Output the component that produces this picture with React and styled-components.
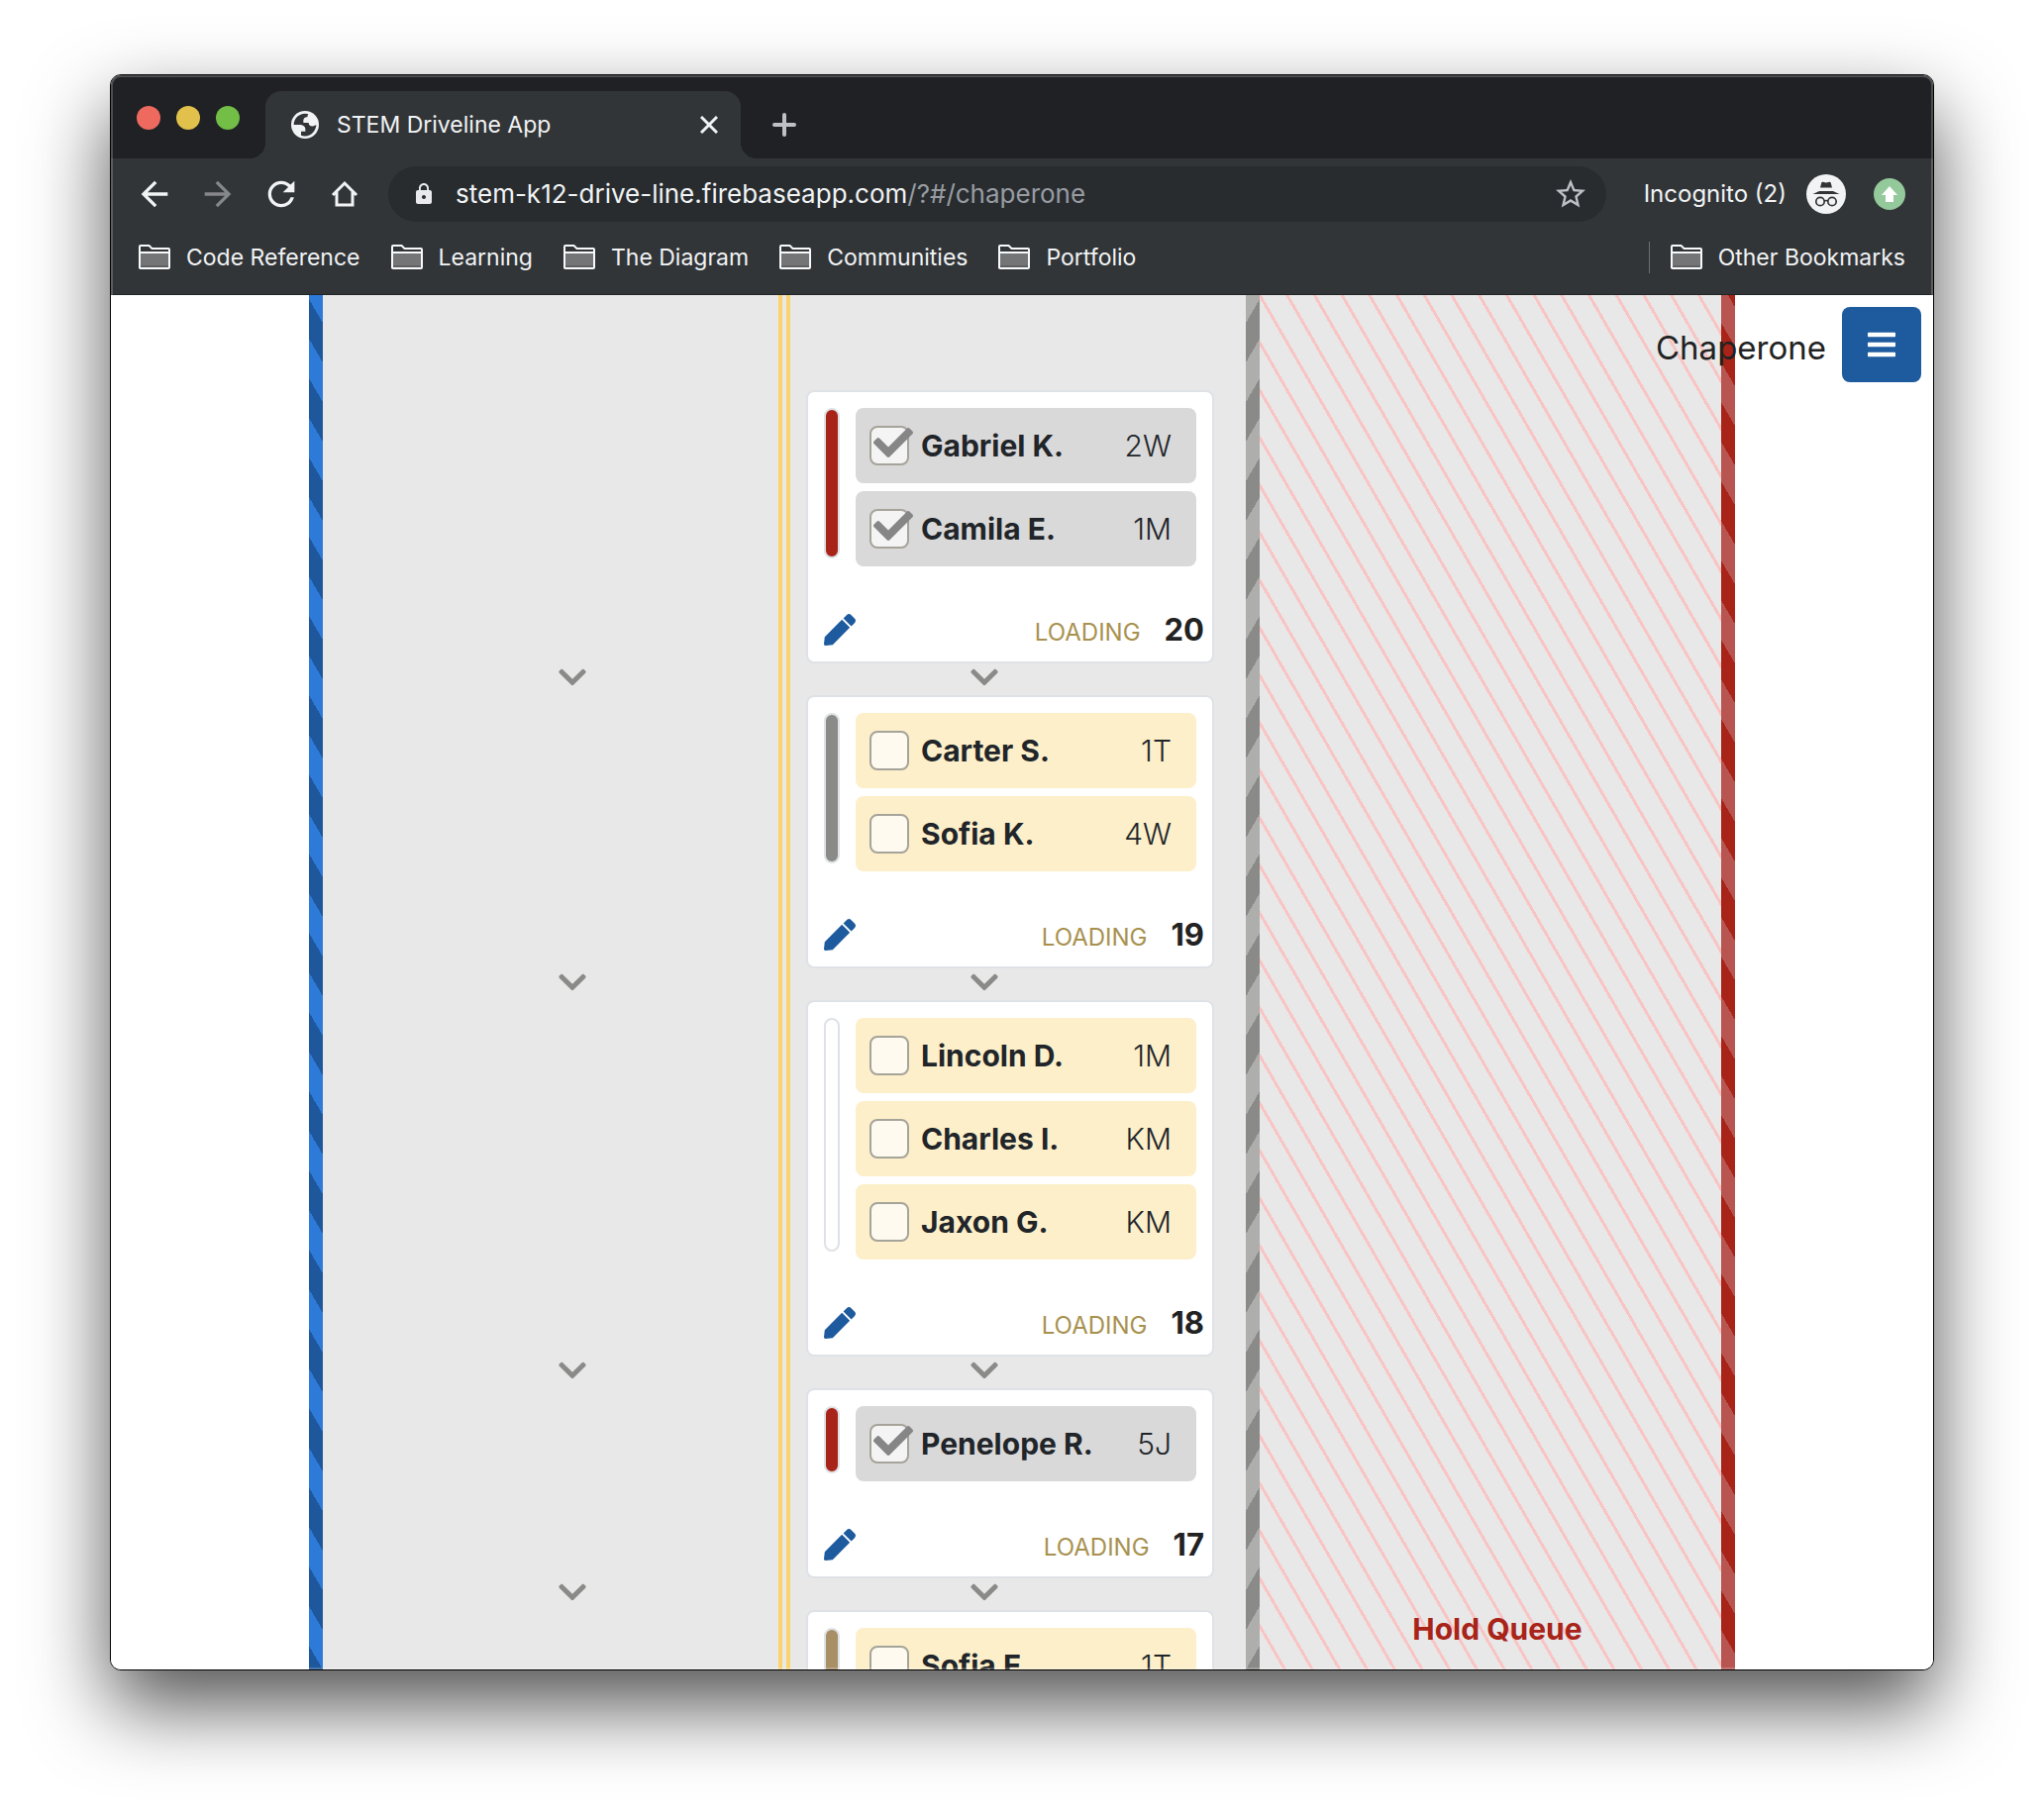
import React from "react";
import styled, { createGlobalStyle } from "styled-components";
import { FaBars, FaCheck, FaChevronDown, FaPen } from "react-icons/fa";
import { MdArrowBack, MdArrowForward, MdLock, MdRefresh, MdStarBorder } from "react-icons/md";

const colors = {
  blue: "#1e5a9e",
  blueLight: "#2e7ad9",
  red: "#a82318",
  redLight: "#b85550",
  gray: "#8a8a88",
  grayLight: "#aeaeac",
  tan: "#a98f66",
  white: "#ffffff",
  yellow: "#fad36a",
  road: "#e8e8e8",
  chrome: "#323538",
  ink: "#212529",
};

const GlobalStyle = createGlobalStyle`
  *, *::before, *::after { box-sizing: border-box; }
  body {
    margin: 0;
    background: #ffffff;
    font-family: Inter, "Liberation Sans", sans-serif;
    color: ${colors.ink};
  }
  button, input { font: inherit; color: inherit; margin: 0; padding: 0; }
  button { border: 0; background: none; cursor: pointer; }
  svg { display: block; flex: none; }
  p, ul { margin: 0; padding: 0; list-style: none; }
`;

const Desktop = styled.div`
  display: flex;
  height: 100vh;
  padding: 75px 111px 147px;
`;

const Window = styled.div`
  position: relative;
  flex: 1;
  min-width: 0;
  display: flex;
  flex-direction: column;
  overflow: hidden;
  border: 1px solid #000000;
  border-radius: 11px;
  background: #ffffff;
  box-shadow: 0 36px 80px rgba(0, 0, 0, 0.68);

  &::after {
    content: "";
    position: absolute;
    inset: 0;
    border-radius: 10px;
    box-shadow: inset 0 0 0 2px rgba(255, 255, 255, 0.2);
    pointer-events: none;
  }
`;

/* Tab strip */

const TabStrip = styled.div`
  display: flex;
  align-items: flex-end;
  height: 84px;
  padding-left: 26px;
  background: #202124;
`;

const WindowButtons = styled.div`
  display: flex;
  gap: 16px;
  align-self: center;
  margin-right: 26px;
  padding-top: 2px;
`;

const WindowButton = styled.button`
  width: 24px;
  height: 24px;
  border-radius: 50%;
  background: ${(p) => p.$color};
`;

const Tab = styled.div`
  position: relative;
  display: flex;
  align-items: center;
  width: 480px;
  height: 68px;
  padding: 0 20px 0 26px;
  border-radius: 16px 16px 0 0;
  background: ${colors.chrome};
  color: #f1f3f4;

  &::before,
  &::after {
    content: "";
    position: absolute;
    bottom: 0;
    width: 16px;
    height: 16px;
  }
  &::before {
    right: 100%;
    background: radial-gradient(circle at 0 0, transparent 16px, ${colors.chrome} 16px);
  }
  &::after {
    left: 100%;
    background: radial-gradient(circle at 100% 0, transparent 16px, ${colors.chrome} 16px);
  }
`;

const TabTitle = styled.span`
  flex: 1;
  margin-left: 18px;
  font-size: 23px;
  line-height: 32px;
  white-space: nowrap;
`;

const IconButton = styled.button`
  display: grid;
  place-items: center;
  width: ${(p) => p.$size || 40}px;
  height: ${(p) => p.$size || 40}px;
  color: ${(p) => p.$color || "#f1f3f4"};
`;

const NewTab = styled(IconButton)`
  align-self: center;
  margin: 16px 0 0 28px;
`;

/* Toolbar */

const Toolbar = styled.div`
  display: flex;
  align-items: center;
  height: 72px;
  padding: 0 28px 0 24px;
  background: ${colors.chrome};
`;

const NavButtons = styled.nav`
  display: flex;
  gap: 24px;
`;

const AddressBar = styled.form`
  flex: 1;
  display: flex;
  align-items: center;
  height: 56px;
  margin: 0 38px 0 24px;
  padding: 0 18px 0 24px;
  border-radius: 28px;
  background: #282c2f;
`;

const Address = styled.div`
  flex: 1;
  margin-left: 20px;
  font-size: 26px;
  line-height: 36px;
  color: #f1f3f4;
`;

const AddressPath = styled.span`
  color: #989ca2;
`;

const Profile = styled.button`
  display: flex;
  align-items: center;
  gap: 20px;
  margin-right: 28px;
  color: #f1f3f4;
  font-size: 24px;
  line-height: 32px;
`;

/* Bookmarks */

const Bookmarks = styled.div`
  display: flex;
  align-items: center;
  gap: 31px;
  height: 66px;
  padding: 0 28px 10px;
  border-bottom: 1px solid #222426;
  background: ${colors.chrome};
`;

const Bookmark = styled.a`
  display: flex;
  align-items: center;
  gap: 16px;
  color: #f1f3f4;
  font-size: 23px;
  line-height: 32px;
  text-decoration: none;
  white-space: nowrap;
`;

const OtherBookmarks = styled.div`
  margin-left: auto;
  padding-left: 21px;
  border-left: 1px solid #6b6e71;
`;

/* Page */

const Page = styled.main`
  position: relative;
  flex: 1;
  min-height: 0;
  overflow: hidden;
  background: #ffffff;
`;

const Road = styled.div`
  display: grid;
  grid-template-columns: 2fr 1fr;
  grid-template-rows: 100%;
  height: 100%;
  max-width: 1440px;
  margin: 0 auto;
  background: ${colors.road};
`;

const Curb = styled.div`
  flex: none;
  width: 14px;
  background: repeating-linear-gradient(
      ${(p) => p.$angle}deg,
      ${(p) => p.$light} 0 20px,
      ${(p) => p.$dark} 20px 40px
    )
    0 ${(p) => p.$offset}px / 14px 80px;
`;

const DriveLanes = styled.section`
  display: flex;
  min-height: 0;
`;

const Queue = styled.div`
  flex: 1;
  padding-top: 96px;
  overflow-y: auto;
  scrollbar-width: none;
  background: linear-gradient(
      90deg,
      ${colors.yellow} 4px,
      transparent 4px 8px,
      ${colors.yellow} 8px
    )
    center / 12px 100% no-repeat;
`;

const QueueRow = styled.div`
  display: grid;
  grid-template-columns: 1fr 1fr;
`;

const ArrowRow = styled(QueueRow)`
  grid-template-rows: 28px;
  height: 32px;
  align-items: center;
  justify-items: center;
  color: ${colors.gray};
`;

const LeftArrow = styled.div`
  padding-left: 38px;
`;

const RightArrow = styled.div`
  padding-right: 62px;
`;

const Card = styled.article`
  grid-column: 2;
  margin: 0 32px 0 22px;
  border: 2px solid #dee2e6;
  border-radius: 8px;
  background: #ffffff;
`;

const CardBody = styled.div`
  display: flex;
  gap: 16px;
  padding: 16px 16px 0;
`;

const CarColor = styled.div`
  width: 16px;
  margin-bottom: 8px;
  border: 2px solid #dee2e6;
  border-radius: 8px;
  background: ${(p) => p.$color};
`;

const Students = styled.ul`
  flex: 1;
  display: flex;
  flex-direction: column;
  gap: 8px;
`;

const StudentRow = styled.label`
  display: flex;
  align-items: center;
  gap: 12px;
  height: 76px;
  padding: 0 25px 0 14px;
  border-radius: 8px;
  background: ${(p) => (p.$loaded ? "#d9d9d9" : "#fcefc9")};
`;

const TickBox = styled.span`
  position: relative;
  display: flex;
  color: #868686;

  svg {
    position: absolute;
    top: -3px;
    left: 4px;
    pointer-events: none;
  }
`;

const Tick = styled.input`
  appearance: none;
  width: 40px;
  height: 40px;
  border: 2px solid #a6a39a;
  border-radius: 8px;
  background: rgba(255, 255, 255, 0.7);
`;

const StudentName = styled.span`
  flex: 1;
  font-size: 30px;
  font-weight: 700;
  line-height: 40px;
  white-space: nowrap;
`;

const ClassCode = styled.span`
  font-size: 30px;
  font-weight: 300;
  line-height: 40px;
`;

const CardFooter = styled.footer`
  display: flex;
  align-items: center;
  height: 96px;
  padding: 32px 8px 0 16px;
  color: ${colors.blue};
`;

const Status = styled.p`
  display: flex;
  align-items: baseline;
  gap: 24px;
  margin-left: auto;
  padding-top: 2px;
  color: #a8914f;
  font-size: 24px;
  line-height: 40px;
`;

const CarNumber = styled.strong`
  color: #222222;
  font-size: 31px;
  font-weight: 700;
`;

const HoldLane = styled.section`
  display: flex;
  min-height: 0;
`;

const HoldArea = styled.div`
  flex: 1;
  display: flex;
  align-items: flex-end;
  justify-content: center;
  padding: 0 0 21px 14px;
  background: repeating-linear-gradient(60deg, #f9c5c4 0 3px, transparent 3px 24px) 0 3px / 100% 1440px;
`;

const HoldTitle = styled.h2`
  margin: 0;
  color: ${colors.red};
  font-size: 30px;
  font-weight: 700;
  line-height: 40px;
`;

const PageHeader = styled.header`
  position: absolute;
  top: 12px;
  right: 12px;
  display: flex;
  align-items: center;
  gap: 16px;
  color: #222222;
  font-size: 33px;
  line-height: 48px;
`;

const PageTitle = styled.span`
  padding-top: 6px;
`;

const MenuButton = styled.button`
  display: grid;
  place-items: center;
  width: 80px;
  height: 76px;
  border-radius: 8px;
  background: ${colors.blue};
  color: #ffffff;
`;

const GlobeIcon = () => (
  <svg width="28" height="28" viewBox="0 0 16 16" aria-hidden="true">
    <circle cx="8" cy="8" r="8" fill="#f1f3f4" />
    <path
      d="M1.500 8h3.300c2.600 0 3.700 1.300 3.400 3.800H5.700v2.300c.7.200 1.500.4 2.300.4 3.700 0 6.300-3 6.500-6.500-.7.500-1.400.8-2.200.8-1.500 0-2.200-.7-2.200-2H7.100c-.3-2.200.5-3.200 2.300-3.200 0-.9.200-1.500.6-1.800C9.400 1.600 8.700 1.500 8 1.500 4.400 1.500 1.500 4.400 1.500 8z"
      fill={colors.chrome}
    />
  </svg>
);

const HomeIcon = () => (
  <svg width="28" height="28" viewBox="0 0 28 28" fill="none" stroke="currentColor" strokeWidth="3" aria-hidden="true">
    <path d="M2 15 14 3l12 12M6 12v13h16V12" />
  </svg>
);

const CloseIcon = () => (
  <svg width="18" height="18" viewBox="0 0 18 18" stroke="currentColor" strokeWidth="3" aria-hidden="true">
    <path d="m1 1 16 16M17 1 1 17" />
  </svg>
);

const PlusIcon = () => (
  <svg width="24" height="24" viewBox="0 0 24 24" stroke="currentColor" strokeWidth="4" strokeLinecap="round" aria-hidden="true">
    <path d="M2 12h20M12 2v20" />
  </svg>
);

const FolderIcon = () => (
  <svg width="32" height="25" viewBox="0 0 32 25" aria-hidden="true">
    <path d="M1 8h30v16H1z" fill="#747577" />
    <path d="M1 21h30v3H1z" fill="#5f6062" />
    <path d="M1 24V2q0-1 1-1h8.500l3 3H30q1 0 1 1v18q0 1-1 1H2q-1 0-1-1zM1 8h30" fill="none" stroke="#f8f9fa" strokeWidth="2" />
  </svg>
);

const IncognitoIcon = () => (
  <svg width="40" height="40" viewBox="0 0 40 40" aria-hidden="true">
    <circle cx="20" cy="20" r="20" fill="#f1f3f4" />
    <path d="m14 13.500 1.300-5q.3-1 1.500-.8l3.200.8 3.200-.8q1.200-.2 1.500.8l1.300 5z" fill="#323538" />
    <path d="M6.500 20q3.500-1.500 6.500-3h14q3 1.500 6.500 3z" fill="#323538" />
    <g fill="none" stroke="#323538" strokeWidth="1.700">
      <circle cx="14" cy="27.500" r="4.200" />
      <circle cx="26" cy="27.500" r="4.200" />
      <path d="M18 27q2-1 4 0" />
    </g>
  </svg>
);

const UpdateIcon = () => (
  <svg width="32" height="32" viewBox="0 0 32 32" aria-hidden="true">
    <circle cx="16" cy="16" r="16" fill="#93c99b" />
    <path d="m16 8 8 9h-4v7h-8v-7H8z" fill="#ffffff" />
  </svg>
);

const bookmarks = ["Code Reference", "Learning", "The Diagram", "Communities", "Portfolio"];

const cars = [
  {
    number: 20,
    color: colors.red,
    students: [
      { name: "Gabriel K.", code: "2W", loaded: true },
      { name: "Camila E.", code: "1M", loaded: true },
    ],
  },
  {
    number: 19,
    color: colors.gray,
    students: [
      { name: "Carter S.", code: "1T" },
      { name: "Sofia K.", code: "4W" },
    ],
  },
  {
    number: 18,
    color: colors.white,
    students: [
      { name: "Lincoln D.", code: "1M" },
      { name: "Charles I.", code: "KM" },
      { name: "Jaxon G.", code: "KM" },
    ],
  },
  { number: 17, color: colors.red, students: [{ name: "Penelope R.", code: "5J", loaded: true }] },
  { number: 16, color: colors.tan, students: [{ name: "Sofia E.", code: "1T" }] },
];

function Student({ name, code, loaded }) {
  const [checked, setChecked] = React.useState(Boolean(loaded));
  return (
    <li>
      <StudentRow $loaded={checked}>
        <TickBox>
          <Tick type="checkbox" checked={checked} onChange={(e) => setChecked(e.target.checked)} />
          {checked && <FaCheck size={40} />}
        </TickBox>
        <StudentName>{name}</StudentName>
        <ClassCode>{code}</ClassCode>
      </StudentRow>
    </li>
  );
}

function CarCard({ car }) {
  return (
    <Card>
      <CardBody>
        <CarColor $color={car.color} />
        <Students>
          {car.students.map((s) => (
            <Student key={s.name} {...s} />
          ))}
        </Students>
      </CardBody>
      <CardFooter>
        <IconButton $size={32} $color={colors.blue} aria-label={`Edit car ${car.number}`}>
          <FaPen size={32} />
        </IconButton>
        <Status>
          LOADING <CarNumber>{car.number}</CarNumber>
        </Status>
      </CardFooter>
    </Card>
  );
}

export default function App() {
  return (
    <>
      <GlobalStyle />
      <Desktop>
        <Window>
          <TabStrip>
            <WindowButtons>
              <WindowButton $color="#ee6a5f" aria-label="Close window" />
              <WindowButton $color="#e1c04c" aria-label="Minimize window" />
              <WindowButton $color="#72be47" aria-label="Zoom window" />
            </WindowButtons>
            <Tab>
              <GlobeIcon />
              <TabTitle>STEM Driveline App</TabTitle>
              <IconButton $size={24} aria-label="Close tab">
                <CloseIcon />
              </IconButton>
            </Tab>
            <NewTab $size={32} $color="#bdc1c6" aria-label="New tab">
              <PlusIcon />
            </NewTab>
          </TabStrip>
          <Toolbar>
            <NavButtons>
              <IconButton aria-label="Back">
                <MdArrowBack size={40} />
              </IconButton>
              <IconButton aria-label="Forward" $color="#85878a">
                <MdArrowForward size={40} />
              </IconButton>
              <IconButton aria-label="Reload">
                <MdRefresh size={40} />
              </IconButton>
              <IconButton aria-label="Home">
                <HomeIcon />
              </IconButton>
            </NavButtons>
            <AddressBar onSubmit={(e) => e.preventDefault()}>
              <MdLock size={24} color="#e8eaed" />
              <Address>
                stem-k12-drive-line.firebaseapp.com<AddressPath>/?#/chaperone</AddressPath>
              </Address>
              <IconButton type="button" $size={36} $color="#bdc1c6" aria-label="Bookmark this page">
                <MdStarBorder size={36} />
              </IconButton>
            </AddressBar>
            <Profile>
              Incognito (2)
              <IncognitoIcon />
            </Profile>
            <IconButton $size={32} aria-label="Update available">
              <UpdateIcon />
            </IconButton>
          </Toolbar>
          <Bookmarks>
            {bookmarks.map((name) => (
              <Bookmark key={name} href="#">
                <FolderIcon />
                {name}
              </Bookmark>
            ))}
            <OtherBookmarks>
              <Bookmark href="#">
                <FolderIcon />
                Other Bookmarks
              </Bookmark>
            </OtherBookmarks>
          </Bookmarks>
          <Page>
            <Road>
              <DriveLanes>
                <Curb $angle={60} $light={colors.blueLight} $dark="#1f579c" $offset={4} />
                <Queue>
                  {cars.map((car) => (
                    <React.Fragment key={car.number}>
                      <QueueRow>
                        <CarCard car={car} />
                      </QueueRow>
                      <ArrowRow>
                        <LeftArrow>
                          <FaChevronDown size={32} />
                        </LeftArrow>
                        <RightArrow>
                          <FaChevronDown size={32} />
                        </RightArrow>
                      </ArrowRow>
                    </React.Fragment>
                  ))}
                </Queue>
                <Curb $angle={-60} $light={colors.grayLight} $dark={colors.gray} $offset={4} />
              </DriveLanes>
              <HoldLane>
                <HoldArea>
                  <HoldTitle>Hold Queue</HoldTitle>
                </HoldArea>
                <Curb $angle={60} $light={colors.redLight} $dark={colors.red} $offset={28} />
              </HoldLane>
            </Road>
            <PageHeader>
              <PageTitle>Chaperone</PageTitle>
              <MenuButton aria-label="Menu">
                <FaBars size={32} />
              </MenuButton>
            </PageHeader>
          </Page>
        </Window>
      </Desktop>
    </>
  );
}
